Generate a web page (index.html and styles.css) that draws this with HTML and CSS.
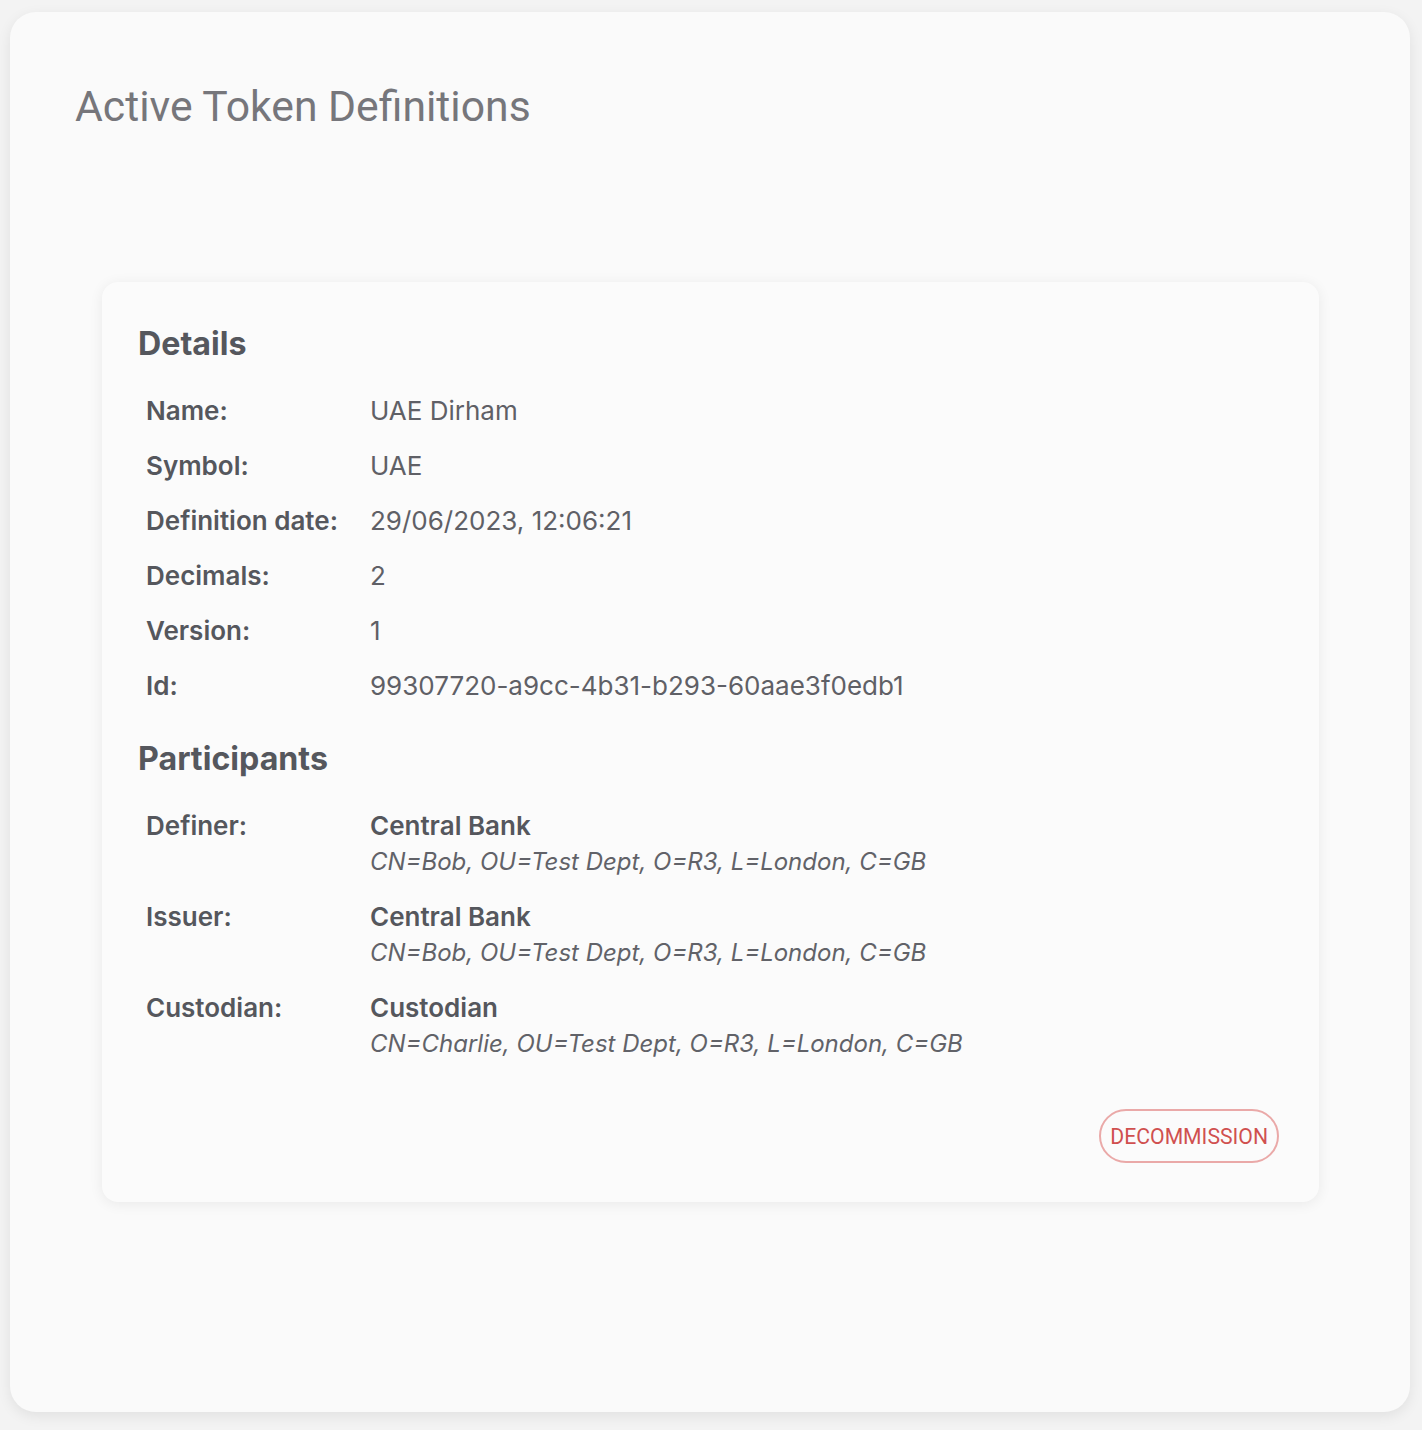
FILE: index.html
```html
<!DOCTYPE html>
<html>
<head>
<meta charset="utf-8">
<link rel="stylesheet" href="styles.css">
</head>
<body>
<div class="page">
  <h1 class="title">Active Token Definitions</h1>
  <div class="card">
    <h2 class="section">Details</h2>
    <div class="rows">
      <div class="row"><div class="label">Name:</div><div class="value">UAE Dirham</div></div>
      <div class="row"><div class="label">Symbol:</div><div class="value">UAE</div></div>
      <div class="row"><div class="label">Definition date:</div><div class="value">29/06/2023, 12:06:21</div></div>
      <div class="row"><div class="label">Decimals:</div><div class="value">2</div></div>
      <div class="row"><div class="label">Version:</div><div class="value">1</div></div>
      <div class="row"><div class="label">Id:</div><div class="value">99307720-a9cc-4b31-b293-60aae3f0edb1</div></div>
    </div>
    <h2 class="section section-2">Participants</h2>
    <div class="parts">
      <div class="part"><div class="label">Definer:</div><div class="pval"><div class="pname">Central Bank</div><div class="pdn">CN=Bob, OU=Test Dept, O=R3, L=London, C=GB</div></div></div>
      <div class="part"><div class="label">Issuer:</div><div class="pval"><div class="pname">Central Bank</div><div class="pdn">CN=Bob, OU=Test Dept, O=R3, L=London, C=GB</div></div></div>
      <div class="part"><div class="label">Custodian:</div><div class="pval"><div class="pname">Custodian</div><div class="pdn">CN=Charlie, OU=Test Dept, O=R3, L=London, C=GB</div></div></div>
    </div>
    <div class="actions"><button class="btn-decom">DECOMMISSION</button></div>
  </div>
</div>
</body>
</html>
```

FILE: styles.css
```css
html, body { margin: 0; padding: 0; }
body {
  background: #f3f3f3;
  font-family: Inter, "Noto Sans", sans-serif;
  padding: 12px 12px 0 10px;
  height: 1430px;
  box-sizing: border-box;
}
.page {
  background: #fafafa;
  border-radius: 26px;
  box-shadow: 0 4px 14px rgba(0,0,0,0.08);
  width: 1400px;
  height: 1400px;
  box-sizing: border-box;
  padding: 70px 0 0 65px;
}
.title {
  margin: 0;
  font-family: Roboto, sans-serif;
  font-weight: 400;
  font-size: 42.7px;
  line-height: 48px;
  color: #76767b;
}
.card {
  margin: 152px 0 0 27px;
  width: 1217px;
  height: 920px;
  box-sizing: border-box;
  background: #fbfbfb;
  border-radius: 16px;
  box-shadow: 0 2px 14px rgba(0,0,0,0.07);
  padding: 42px 40px 0 36px;
  display: flex;
  flex-direction: column;
}
.section {
  margin: 0;
  font-size: 32.2px;
  line-height: 40px;
  font-weight: 700;
  color: #55575d;
}
.section-2 { margin-top: 38px; }
.rows { padding: 32px 0 0 8px; display: flex; flex-direction: column; gap: 25px; }
.row, .part { display: flex; }
.label {
  width: 224px;
  flex: none;
  font-size: 26px;
  line-height: 30px;
  font-weight: 600;
  color: #55575d;
}
.value {
  font-size: 26px;
  line-height: 30px;
  color: #5f6066;
}
.parts { padding: 32px 0 0 8px; display: flex; flex-direction: column; gap: 25px; }
.pname { font-size: 26px; line-height: 30px; font-weight: 600; color: #55575d; }
.pdn { font-size: 24px; line-height: 30px; font-style: italic; color: #616268; margin-top: 6px; }
.actions { display: flex; justify-content: flex-end; margin-top: 50px; }
.btn-decom {
  font-family: Roboto, sans-serif;
  font-size: 21.2px;
  color: #d0504f;
  background: transparent;
  border: 2px solid #eaa9a8;
  border-radius: 28px;
  height: 54px;
  padding: 0 9px;
  cursor: pointer;
}
```
